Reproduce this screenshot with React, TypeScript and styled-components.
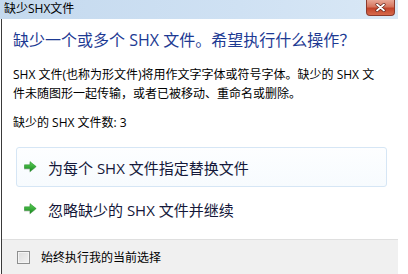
import styled, { createGlobalStyle } from 'styled-components';

const cjk = `"Segoe UI", "Open Sans", "Noto Sans CJK SC", sans-serif`;

const GlobalStyle = createGlobalStyle`
  html, body {
    margin: 0;
    padding: 0;
    background: #ffffff;
  }
  body {
    font-family: ${cjk};
  }
`;

const Window = styled.div`
  width: 398px;
  height: 274px;
  display: flex;
  flex-direction: column;
  overflow: hidden;
`;

const TitleBar = styled.div`
  height: 19px;
  flex: none;
  display: flex;
  align-items: flex-start;
  justify-content: space-between;
  padding-left: 4px;
  background: linear-gradient(to right, #c4d9ee 0%, #cfe1f3 60%, #d9e8f6 100%);
`;

const TitleText = styled.span`
  font-size: 12px;
  line-height: 17px;
  color: #000000;
`;

const CloseButton = styled.div`
  width: 29px;
  height: 16px;
  margin-right: 3px;
  box-sizing: border-box;
  border: 1px solid #8c3a2c;
  border-top: none;
  border-radius: 0 0 4px 4px;
  background: linear-gradient(to bottom, #e8a796 0%, #d6765f 45%, #c2432a 55%, #d66a4c 100%);
  display: flex;
  align-items: center;
  justify-content: center;
`;

const Client = styled.div`
  flex: 1;
  display: flex;
  flex-direction: column;
  margin-left: 1px;
  border-left: 1px solid #3a3a3a;
  background: #ffffff;
`;

const Content = styled.div`
  padding: 10px 0 0 11px;
  display: flex;
  flex-direction: column;
`;

const Heading = styled.div`
  font-size: 16px;
  line-height: 22px;
  color: #1d3a93;
`;

const Paragraph = styled.p<{ $gap: number }>`
  margin: ${p => p.$gap}px 0 0 0;
  font-size: 12px;
  line-height: 19px;
  color: #000000;
`;

const Options = styled.div`
  display: flex;
  flex-direction: column;
  gap: 2px;
  margin: 15px 11px 0 14px;
`;

const CommandLink = styled.div<{ $hover?: boolean }>`
  height: 40px;
  box-sizing: border-box;
  display: flex;
  align-items: center;
  gap: 11px;
  padding-left: 7px;
  border-radius: 3px;
  border: 1px solid ${p => (p.$hover ? '#d6e6f5' : 'transparent')};
  background: ${p => (p.$hover ? 'linear-gradient(to bottom, #fdfeff, #f7fbfe)' : 'transparent')};
`;

const LinkText = styled.span`
  font-size: 15px;
  color: #14183a;
`;

const Footer = styled.div`
  margin-top: auto;
  height: 35px;
  box-sizing: border-box;
  border-top: 1px solid #dfdfdf;
  background: #f0f0f0;
  display: flex;
  align-items: center;
  gap: 11px;
  padding-left: 15px;
`;

const CheckBox = styled.span`
  width: 13px;
  height: 13px;
  box-sizing: border-box;
  border: 1px solid #8e8f8f;
  background: linear-gradient(135deg, #dcdcdc 0%, #f2f2f2 100%);
  box-shadow: inset 0 0 0 1px #f4f4f4;
`;

const FooterText = styled.span`
  font-size: 12px;
  color: #000000;
`;

function Arrow() {
  return (
    <svg width="13" height="12" viewBox="0 0 13 12">
      <defs>
        <linearGradient id="ag" x1="0" y1="0" x2="0" y2="1">
          <stop offset="0" stopColor="#5fd25a" />
          <stop offset="1" stopColor="#17891d" />
        </linearGradient>
      </defs>
      <path d="M0.5 4 H6 V1 L12 6 L6 11 V8 H0.5 Z" fill="#000" opacity="0.15" transform="translate(-0.5,0.8)" />
      <path d="M0.5 3.8 H6 V0.6 L12.2 5.6 L6 10.6 V7.4 H0.5 Z" fill="url(#ag)" stroke="#238a27" strokeWidth="0.5" strokeLinejoin="round" />
    </svg>
  );
}

function CloseGlyph() {
  return (
    <svg width="11" height="9" viewBox="0 0 11 9">
      <path d="M2 1.5 L9 7.5 M9 1.5 L2 7.5" stroke="#5a1a10" strokeWidth="3" strokeLinecap="round" />
      <path d="M2 1.5 L9 7.5 M9 1.5 L2 7.5" stroke="#ffffff" strokeWidth="1.8" strokeLinecap="round" />
    </svg>
  );
}

function App() {
  return (
    <>
      <GlobalStyle />
      <Window>
        <TitleBar>
          <TitleText>缺少SHX文件</TitleText>
          <CloseButton>
            <CloseGlyph />
          </CloseButton>
        </TitleBar>
        <Client>
          <Content>
            <Heading>缺少一个或多个 SHX 文件。希望执行什么操作？</Heading>
            <Paragraph $gap={14}>
              SHX 文件(也称为形文件)将用作文字字体或符号字体。缺少的 SHX 文<br />
              件未随图形一起传输，或者已被移动、重命名或删除。
            </Paragraph>
            <Paragraph $gap={10}>缺少的 SHX 文件数: 3</Paragraph>
          </Content>
          <Options>
            <CommandLink $hover>
              <Arrow />
              <LinkText>为每个 SHX 文件指定替换文件</LinkText>
            </CommandLink>
            <CommandLink>
              <Arrow />
              <LinkText>忽略缺少的 SHX 文件并继续</LinkText>
            </CommandLink>
          </Options>
          <Footer>
            <CheckBox />
            <FooterText>始终执行我的当前选择</FooterText>
          </Footer>
        </Client>
      </Window>
    </>
  );
}

export default App;
